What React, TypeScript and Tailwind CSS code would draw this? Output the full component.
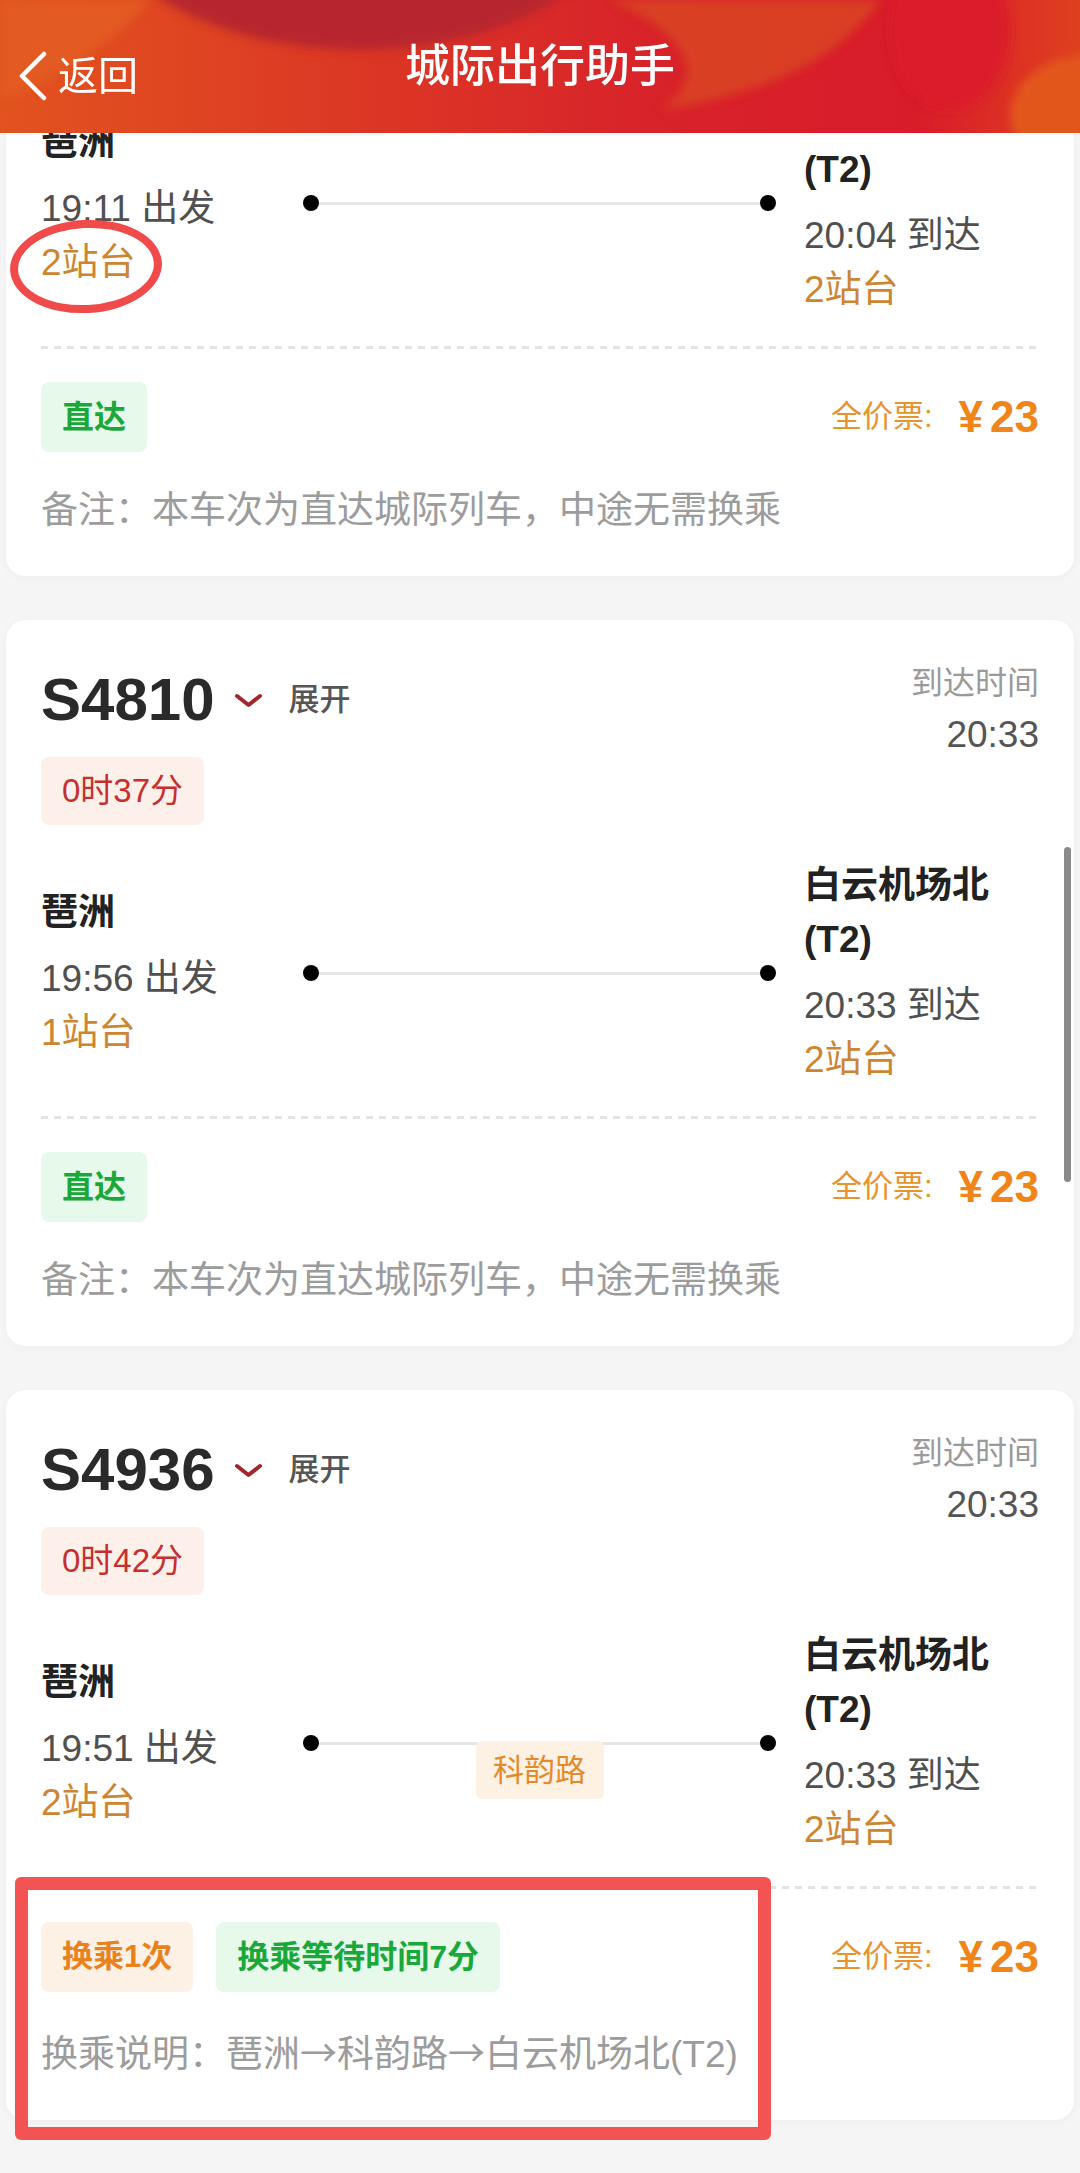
import React from "react";

type Train = {
  no: string;
  duration: string;
  arrive: string;
  depTime: string;
  depPlatform: string;
  arrTime: string;
  arrPlatform: string;
  via?: string;
  transfer?: boolean;
  note: React.ReactNode;
};

const Arrow = () => <span className="font-['Noto_Sans_CJK_SC',sans-serif]">→</span>;

const trains: Train[] = [
  {
    no: "S4802",
    duration: "0时53分",
    arrive: "20:04",
    depTime: "19:11",
    depPlatform: "2站台",
    arrTime: "20:04",
    arrPlatform: "2站台",
    note: "备注：本车次为直达城际列车，中途无需换乘",
  },
  {
    no: "S4810",
    duration: "0时37分",
    arrive: "20:33",
    depTime: "19:56",
    depPlatform: "1站台",
    arrTime: "20:33",
    arrPlatform: "2站台",
    note: "备注：本车次为直达城际列车，中途无需换乘",
  },
  {
    no: "S4936",
    duration: "0时42分",
    arrive: "20:33",
    depTime: "19:51",
    depPlatform: "2站台",
    arrTime: "20:33",
    arrPlatform: "2站台",
    via: "科韵路",
    transfer: true,
    note: (
      <>
        换乘说明：琶洲<Arrow />科韵路<Arrow />白云机场北(T2)
      </>
    ),
  },
];

const HeaderBg = () => (
  <svg viewBox="0 0 1080 133" preserveAspectRatio="none" className="absolute inset-0 w-full h-full">
    <defs>
      <linearGradient id="hbase" x1="0" x2="1" y1="0" y2="0">
        <stop offset="0" stopColor="#e2531f" />
        <stop offset="0.3" stopColor="#dc3a24" />
        <stop offset="0.6" stopColor="#d8232a" />
        <stop offset="0.85" stopColor="#d91c2a" />
        <stop offset="1" stopColor="#df4020" />
      </linearGradient>
      <filter id="soft" x="-20%" y="-50%" width="140%" height="200%">
        <feGaussianBlur stdDeviation="5" />
      </filter>
    </defs>
    <rect width="1080" height="133" fill="url(#hbase)" />
    <g filter="url(#soft)">
      <path d="M0 0 L150 0 C110 45 60 80 0 100 Z" fill="#e35a22" />
      <ellipse cx="360" cy="-100" rx="265" ry="150" fill="#b7252e" />
      <path d="M610 0 L880 0 C850 45 790 90 660 110 C720 70 670 25 610 0 Z" fill="#da4a21" opacity="0.75" />
      <ellipse cx="950" cy="30" rx="60" ry="80" fill="#db1a2a" />
      <ellipse cx="1090" cy="115" rx="80" ry="60" fill="#e2561f" />
    </g>
  </svg>
);

const Dot = () => <div className="w-4 h-4 rounded-full bg-black shrink-0" />;

const Card = ({ t, first, last }: { t: Train; first?: boolean; last?: boolean }) => (
  <div
    className={`relative mx-[6px] bg-white rounded-[20px] shadow-[0_2px_10px_rgba(0,0,0,0.03)] px-[35px] pt-[40px] pb-[40px] ${first ? "mt-[-283px]" : ""}`}
  >
    {/* header row, scrolled away under the nav bar on the first card */}
    <div className={`flex justify-between items-start ${first ? "invisible" : ""}`}>
      <div className="flex flex-col items-start">
        <div className="flex items-center h-[80px]">
          <span className="text-[60px] font-bold text-[#2a2a2a] leading-none">{t.no}</span>
          <svg width="29" height="15" viewBox="0 0 29 15" className="ml-[19px]">
            <polyline points="3,3 14.5,12 26,3" fill="none" stroke="#a3262d" strokeWidth="4" strokeLinecap="round" strokeLinejoin="round" />
          </svg>
          <span className="ml-[26px] text-[31px] font-medium text-[#555]">展开</span>
        </div>
        <div className="mt-[17px] h-[68px] px-[21px] inline-flex items-center rounded-[8px] bg-[#fdf0ea] text-[33px] text-[#c62f2f]">
          {t.duration}
        </div>
      </div>
      <div className="flex flex-col items-end">
        <span className="text-[32px] leading-[46px] text-[#9a9a9a]">到达时间</span>
        <span className="text-[37px] leading-[58px] text-[#555]">{t.arrive}</span>
      </div>
    </div>

    {/* stations */}
    <div className="mt-[34px] flex items-center text-[37px] leading-[54px]">
      <div className="w-[262px] flex flex-col">
        <span className="font-bold text-[#222] mb-[12px]">琶洲</span>
        <span className="text-[#505050]">{t.depTime} 出发</span>
        <span className="text-[#cd8532]">{t.depPlatform}</span>
      </div>
      <div className="flex-1 relative flex items-center">
        <Dot />
        <div className="flex-1 h-[3px] bg-[#e6e6e6]" />
        <Dot />
        {t.via && (
          <div className="absolute left-1/2 -translate-x-1/2 top-[6px] h-[58px] w-[128px] flex items-center justify-center rounded-[6px] bg-[#fdf1e4] text-[31px] text-[#e38b2c] leading-none">
            {t.via}
          </div>
        )}
      </div>
      <div className="ml-[28px] w-[235px] flex flex-col">
        <span className={`font-bold text-[#222] ${first ? "invisible" : ""}`}>白云机场北</span>
        <span className="font-bold text-[#222] mb-[12px]">(T2)</span>
        <span className="text-[#505050]">{t.arrTime} 到达</span>
        <span className="text-[#cd8532]">{t.arrPlatform}</span>
      </div>
    </div>

    {/* dashed divider */}
    <div className="mt-[29px] h-[3px] bg-[repeating-linear-gradient(90deg,#e3e3e3_0_7px,transparent_7px_13px)]" />

    {/* tags + price */}
    <div className="mt-[33px] flex items-center justify-between">
      <div className="flex items-center gap-[23px]">
        {t.transfer ? (
          <>
            <div className="h-[70px] px-[21px] flex items-center rounded-[8px] bg-[#fdf0e4] text-[31px] font-bold text-[#e8821e]">
              换乘1次
            </div>
            <div className="h-[70px] px-[21px] flex items-center rounded-[8px] bg-[#e6f9eb] text-[32px] font-bold text-[#1ba83a]">
              换乘等待时间7分
            </div>
          </>
        ) : (
          <div className="h-[70px] px-[21px] flex items-center rounded-[8px] bg-[#e6f9eb] text-[32px] font-bold text-[#1ba83a]">
            直达
          </div>
        )}
      </div>
      <div className="flex items-center">
        <span className="text-[31px] text-[#e8932e]">全价票:</span>
        <span className="ml-[26px] text-[44px] font-bold text-[#f08519] leading-none">¥</span>
        <span className="ml-[7px] text-[44px] font-bold text-[#f08519] leading-none">23</span>
      </div>
    </div>

    <div className="mt-[34px] text-[37px] leading-[50px] text-[#9c9c9c] whitespace-nowrap">{t.note}</div>

    {first && (
      <div className="absolute left-[4px] top-[370px] w-[152px] h-[93px] rounded-[50%] border-[8px] border-[#f04a4a] -rotate-3" />
    )}
    {last && (
      <div className="absolute left-[9px] top-[487px] w-[756px] h-[263px] rounded-[6px] border-[13px] border-[#f35353]" />
    )}
  </div>
);

export default function App() {
  return (
    <div className="relative w-[1080px] h-[2173px] overflow-hidden bg-[#f5f5f5] font-['Liberation_Sans','Noto_Sans_CJK_SC',sans-serif]">
      <header className="relative z-10 h-[133px] flex items-center justify-center text-white">
        <HeaderBg />
        <div className="absolute left-[17px] top-[51px] flex items-center">
          <svg width="31" height="50" viewBox="0 0 31 50">
            <polyline points="27,3 5,25 27,47" fill="none" stroke="#fff" strokeWidth="4.5" strokeLinecap="round" strokeLinejoin="round" />
          </svg>
          <span className="ml-[10px] text-[40px] leading-none">返回</span>
        </div>
        <h1 className="relative text-[45px] font-medium leading-none">城际出行助手</h1>
      </header>
      <div className="h-[2040px] overflow-hidden flex flex-col gap-[44px]">
        {trains.map((t, i) => (
          <Card key={t.no} t={t} first={i === 0} last={i === trains.length - 1} />
        ))}
      </div>
      <div className="absolute left-[1064px] top-[847px] w-[7px] h-[335px] rounded-full bg-[#8a8a8a]" />
    </div>
  );
}
